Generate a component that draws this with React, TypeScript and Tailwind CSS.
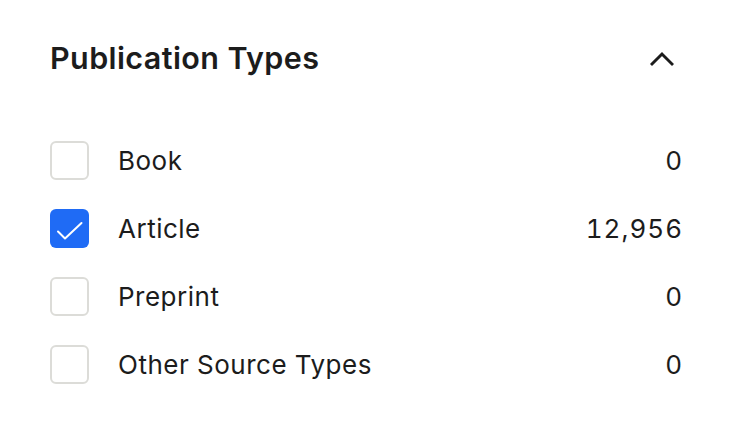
import React from 'react';

const types = [
  { label: 'Book', count: '0', checked: false },
  { label: 'Article', count: '12,956', checked: true },
  { label: 'Preprint', count: '0', checked: false },
  { label: 'Other Source Types', count: '0', checked: false },
];

function Checkbox({ checked }: { checked: boolean }) {
  if (checked) {
    return (
      <span className="block h-[39px] w-[39px] shrink-0 rounded-[6px] bg-[#1f6bf5]">
        <svg width="39" height="39" viewBox="0 0 39 39" fill="none">
          <path d="M8 22.5l7 7L31.5 14" stroke="white" strokeWidth="2" strokeLinecap="round" strokeLinejoin="round" />
        </svg>
      </span>
    );
  }
  return <span className="h-[39px] w-[39px] shrink-0 rounded-[6px] border-2 border-[#dcdcd8] bg-white" />;
}

export default function App() {
  return (
    <div className="h-[430px] w-[732px] bg-white px-[50px] pt-[38px] text-[#1c1c1c]" style={{ fontFamily: 'Inter, "Noto Sans", sans-serif' }}>
      <div className="flex items-center justify-between">
        <h2 className="text-[30.5px] font-semibold leading-[40px] tracking-[0.4px]">Publication Types</h2>
        <svg className="mr-[8px]" width="24" height="24" viewBox="0 0 24 24" fill="none">
          <path d="M2 18L12 8l10 10" stroke="#1c1c1c" strokeWidth="3" strokeLinecap="square" />
        </svg>
      </div>
      <ul className="mt-[62px] flex flex-col gap-[28px]">
        {types.map((t) => (
          <li key={t.label} className="flex h-[40px] items-center">
            <Checkbox checked={t.checked} />
            <span className="ml-[29px] flex-1 text-[26px] tracking-[0.5px]">{t.label}</span>
            <span className="mr-[-1px] text-[26px] tracking-[1px] tabular-nums">{t.count}</span>
          </li>
        ))}
      </ul>
    </div>
  );
}
